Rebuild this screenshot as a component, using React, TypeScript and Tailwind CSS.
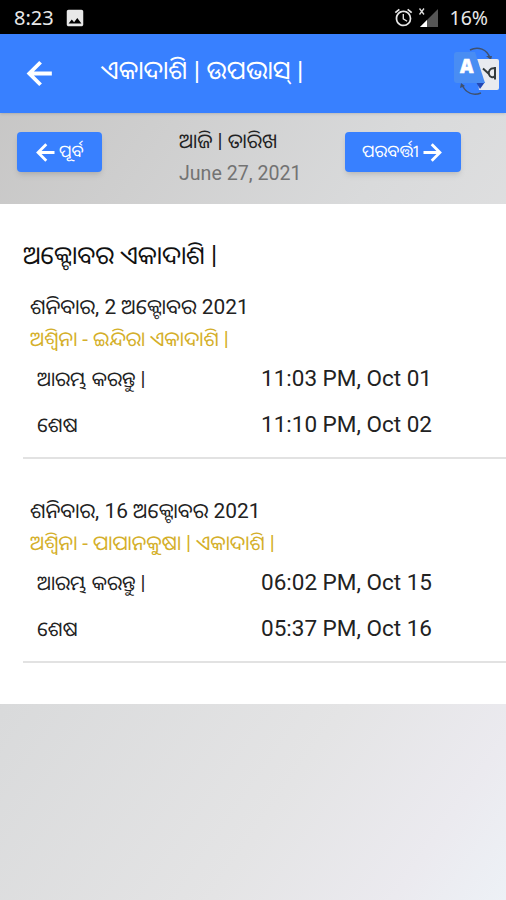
import { MdAlarm, MdImage } from 'react-icons/md';

const fasts = [
  {
    day: 'ଶନିବାର, 2 ଅକ୍ଟୋବର 2021',
    name: 'ଅଶ୍ୱିନା - ଇନ୍ଦିରା ଏକାଦାଶି |',
    start: '11:03 PM, Oct 01',
    end: '11:10 PM, Oct 02',
  },
  {
    day: 'ଶନିବାର, 16 ଅକ୍ଟୋବର 2021',
    name: 'ଅଶ୍ୱିନା - ପାପାନକୁଷା | ଏକାଦାଶି |',
    start: '06:02 PM, Oct 15',
    end: '05:37 PM, Oct 16',
  },
];

function Arrow({ className }: { className: string }) {
  return (
    <svg className={className} viewBox="0 0 24 24" fill="none" stroke="currentColor" strokeWidth="2.500">
      <path d="M20 12H5.500M12.700 4.700L5.400 12l7.300 7.300" />
    </svg>
  );
}

function StatusBar() {
  return (
    <div className="flex h-[34px] items-center bg-black pt-px text-[#e8e8e8]">
      <span className="ml-[14px] w-[50px] font-['Noto_Sans'] text-[20px] leading-none">8:23</span>
      <MdImage className="size-[22px]" />
      <div className="ml-auto mr-[18px] flex items-center">
        <MdAlarm className="size-[21px]" />
        <svg className="ml-1 h-[22px] w-5" viewBox="0 0 20 22">
          <path d="M20 2v18H2z" fill="#555" />
          <path d="M9 13v7H2z" fill="#fff" />
          <path d="M1.500 1.500l4.500 6M6 1.500l-4.500 6" stroke="#ddd" strokeWidth="1.300" />
        </svg>
        <span className="ml-[11px] font-['Noto_Sans'] text-[19.500px] leading-none">16%</span>
      </div>
    </div>
  );
}

function TranslateIcon() {
  return (
    <svg className="h-[54px] w-[50px]" viewBox="0 0 50 54" fontFamily="Open Sans, sans-serif">
      <path d="M18 5c8-4 17-1 20 8M10 40c4 8 11 11 19 8" fill="none" stroke="#3f5170" strokeWidth="1.500" />
      <path d="M34 11h6l-1 4zM8 43l1-5 4 3z" fill="#3f5170" />
      <path d="M24 14h21q2 0 2 2v27q0 2-2 2H27z" fill="#e9ebef" />
      <path d="M24 37h9l-5 7z" fill="#2348b4" />
      <path d="M5 7h18l10 31H5q-3 0-3-3V10q0-3 3-3z" fill="#498df3" />
      <text x="8" y="28" fontSize="18.500" fontWeight="800" fill="#fff" stroke="#fff" strokeWidth="0.600">A</text>
      <path d="M31 23.500l6 5.500M43 22v12.500M43 23.500c-5-1-7 3-6 6s5 4 6 1" fill="none" stroke="#333a3c" strokeWidth="2" />
    </svg>
  );
}

function Header() {
  return (
    <header className="z-10 flex h-[79px] items-center bg-[#3880ff] text-white shadow-sm">
      <Arrow className="ml-[21px] size-[37px]" />
      <h1 className="ml-[43px] mt-[-5px] text-[25.900px] leading-none">ଏକାଦାଶି | ଉପଭାସ୍ |</h1>
      <div className="ml-auto mr-[4px] mt-[-4px]">
        <TranslateIcon />
      </div>
    </header>
  );
}

function DateBar() {
  return (
    <div className="flex h-[91px] items-start">
      <button className="ml-[17px] mt-[19px] flex h-[40px] w-[85px] items-center rounded bg-[#3880ff] pl-[15px] text-[17px] text-white shadow-md">
        <Arrow className="size-[27px] shrink-0" />
        ପୂର୍ବ
      </button>
      <div className="ml-[77px] mt-[12px] w-[166px]">
        <div className="h-[32px] text-[20.400px] leading-[32px] text-[#222]">ଆଜି | ତାରିଖ</div>
        <div className="h-[32px] text-[19.600px] leading-[34px] text-[#737373]">June 27, 2021</div>
      </div>
      <button className="mt-[19px] flex h-[40px] w-[116px] items-center rounded bg-[#3880ff] pl-[17px] text-[17px] text-white shadow-md">
        ପରବର୍ତ୍ତୀ
        <Arrow className="size-[27px] shrink-0 rotate-180" />
      </button>
    </div>
  );
}

function App() {
  return (
    <div className="flex h-[900px] w-[506px] flex-col overflow-hidden whitespace-nowrap bg-[linear-gradient(125deg,#c4c3c2_0%,#d9dadb_44%,#e4e4e5_74%,#ebeaef_90%,#edf1f6_100%)] font-[Roboto,'Noto_Sans_Oriya','Noto_Sans',sans-serif]">
      <StatusBar />
      <Header />
      <DateBar />
      <main className="h-[500px] bg-white pl-[23px] pt-[33px] text-[#222]">
        <h2 className="h-[54px] text-[25.300px] leading-[38px] text-[#111]">ଅକ୍ଟୋବର ଏକାଦାଶି |</h2>
        {fasts.map((fast) => (
          <section key={fast.day} className="mb-[36px] h-[168px] border-b-2 border-[#e2e2e2] pl-[7px]">
            <div className="h-[33px] text-[20.900px] leading-[33px]">{fast.day}</div>
            <div className="h-[32px] text-[20.500px] leading-[30px] text-[#d4af2a]">{fast.name}</div>
            <div className="flex h-[46px] items-center pl-[7px] text-[22.500px]">
              <span className="w-[224px] text-[20.200px]">ଆରମ୍ଭ କରନ୍ତୁ |</span>
              <span>{fast.start}</span>
            </div>
            <div className="flex h-[46px] items-center pl-[7px] text-[22.500px]">
              <span className="w-[224px] text-[20.200px]">ଶେଷ</span>
              <span>{fast.end}</span>
            </div>
          </section>
        ))}
      </main>
    </div>
  );
}

export default App;
